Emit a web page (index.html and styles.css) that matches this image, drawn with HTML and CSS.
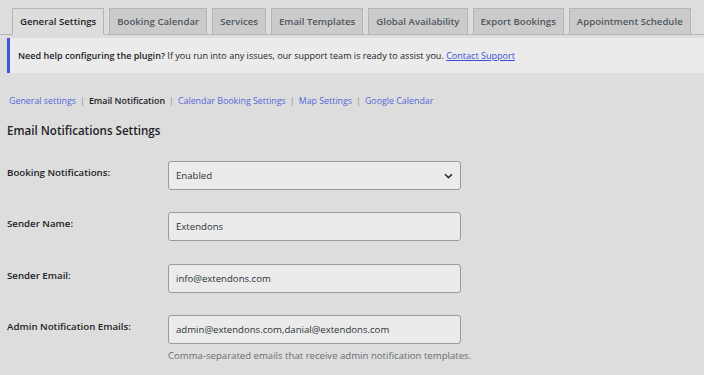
FILE: index.html
```html
<!DOCTYPE html>
<html lang="en">
<head>
<meta charset="utf-8">
<title>Email Notification Settings</title>
<link rel="stylesheet" href="styles.css">
</head>
<body>
<div class="wrap">
  <nav class="tabs">
    <a class="tab active" href="#">General Settings</a>
    <a class="tab" href="#">Booking Calendar</a>
    <a class="tab" href="#">Services</a>
    <a class="tab" href="#">Email Templates</a>
    <a class="tab" href="#">Global Availability</a>
    <a class="tab" href="#">Export Bookings</a>
    <a class="tab" href="#">Appointment Schedule</a>
  </nav>

  <div class="notice">
    <p><strong>Need help configuring the plugin?</strong> If you run into any issues, our support team is ready to assist you. <a href="#">Contact Support</a></p>
  </div>

  <ul class="subnav">
    <li><a href="#">General settings</a><span class="sep">|</span></li>
    <li><a class="current" href="#">Email Notification</a><span class="sep">|</span></li>
    <li><a href="#">Calendar Booking Settings</a><span class="sep">|</span></li>
    <li><a href="#">Map Settings</a><span class="sep">|</span></li>
    <li><a href="#">Google Calendar</a></li>
  </ul>

  <h2 class="title">Email Notifications Settings</h2>

  <div class="form">
    <div class="row">
      <label class="label" for="bn">Booking Notifications:</label>
      <div class="field">
        <div class="select" id="bn">
          <span>Enabled</span>
          <svg class="chev" width="9" height="6" viewBox="0 0 9 6"><path d="M1 1.2 L4.5 4.6 L8 1.2" fill="none" stroke="#2c2c2c" stroke-width="1.6"/></svg>
        </div>
      </div>
    </div>
    <div class="row">
      <label class="label" for="sn">Sender Name:</label>
      <div class="field"><input class="input" id="sn" type="text" value="Extendons"></div>
    </div>
    <div class="row">
      <label class="label" for="se">Sender Email:</label>
      <div class="field"><input class="input" id="se" type="text" value="info@extendons.com"></div>
    </div>
    <div class="row">
      <label class="label" for="ae">Admin Notification Emails:</label>
      <div class="field">
        <input class="input" id="ae" type="text" value="admin@extendons.com,danial@extendons.com">
        <p class="desc">Comma-separated emails that receive admin notification templates.</p>
      </div>
    </div>
  </div>
</div>
</body>
</html>
```

FILE: styles.css
```css
* { box-sizing: border-box; }
html, body {
  margin: 0;
  padding: 0;
  background: #dddddd;
}
body {
  font-family: "Open Sans", "Noto Sans", sans-serif;
  font-size: 9.05px;
  color: #1d2327;
  width: 704px;
  height: 375px;
  overflow: hidden;
}
.wrap { padding: 0; }

.tabs {
  display: flex;
  gap: 5px;
  padding: 8px 0 0 12px;
  border-bottom: 1px solid #b4b5b8;
  height: 35px;
}
.tab {
  display: block;
  height: 27px;
  padding: 0 7px;
  line-height: 25px;
  font-size: 9.62px;
  font-weight: 600;
  color: #50575e;
  text-decoration: none;
  background: #cbcbcc;
  border: 1px solid #b4b5b8;
  white-space: nowrap;
}
.tab.active {
  background: #dddddd;
  color: #1d2327;
  border-bottom-color: #dddddd;
}

.notice {
  margin: 3px 0 0 7px;
  height: 35px;
  background: #ebebeb;
  border-left: 3px solid #4156dc;
  padding: 0 0 0 8px;
  display: flex;
  align-items: center;
}
.notice p { margin: 0; }
.notice strong { font-weight: 600; }
.notice a { color: #3a4fd0; }

.subnav {
  list-style: none;
  margin: 21px 0 0 9px;
  padding: 0;
  display: flex;
  height: 14px;
  line-height: 14px;
  font-size: 8.85px;
}
.subnav a {
  color: #5468da;
  text-decoration: none;
}
.subnav a.current {
  color: #1d2327;
  font-weight: 600;
}
.sep {
  color: #8a8c90;
  margin: 0 4px;
}

.title {
  margin: 15px 0 0 7px;
  font-size: 11.6px;
  font-weight: 600;
  line-height: 16px;
  color: #1d2327;
}

.form {
  margin: 22px 0 0 7px;
  display: flex;
  flex-direction: column;
  gap: 22.3px;
}
.row {
  display: grid;
  grid-template-columns: 161px 293px;
}
.label {
  font-weight: 600;
  font-size: 9.7px;
  padding-top: 5px;
  line-height: 13px;
}
.select, .input {
  display: flex;
  align-items: center;
  width: 293px;
  height: 29px;
  background: #ebebeb;
  border: 1px solid #9a9b9e;
  border-radius: 3px;
  padding: 0 7px;
  font-family: inherit;
  font-size: 9.6px;
  color: #2c3338;
}
.select { justify-content: space-between; padding-right: 7px; }
.input { outline: none; }
.desc {
  margin: 5px 0 0;
  font-size: 9.6px;
  color: #6a6d72;
  line-height: 13px;
  white-space: nowrap;
}
```
